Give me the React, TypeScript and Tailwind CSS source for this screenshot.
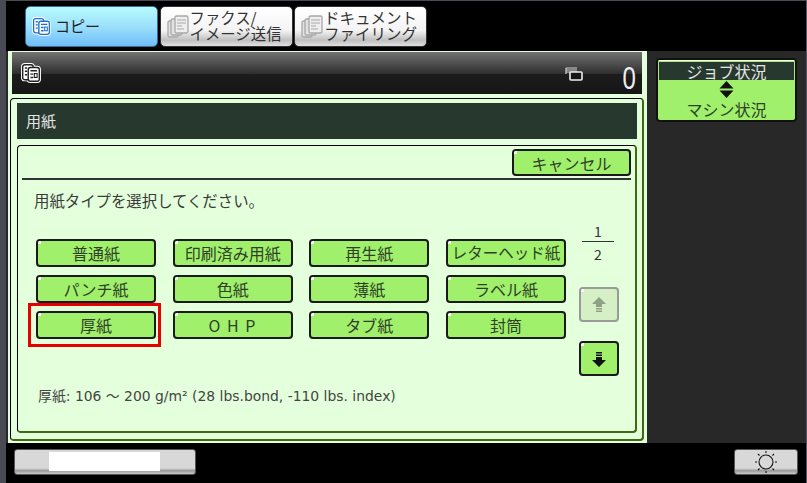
import { ReactNode } from "react";

const jp = "font-['Noto_Sans_CJK_JP','Noto_Sans',sans-serif]";

function CopyIcon({ size = 20, line = "#1f6fd0" }: { size?: number; line?: string }) {
    return (
        <svg width={size} height={size} viewBox="0 0 18 18" className="shrink-0">
            <rect x="1.500" y="1.500" width="9.500" height="13.500" rx="2" fill="#fff" stroke="#fff" strokeWidth="3" />
            <rect x="6.500" y="4" width="10" height="12.500" rx="2" fill="#fff" stroke="#fff" strokeWidth="3" />
            <rect x="1.500" y="1.500" width="9.500" height="13.500" rx="2" fill="#fff" stroke={line} strokeWidth="1.300" />
            <rect x="6.500" y="4" width="10" height="12.500" rx="2" fill="#fff" stroke={line} strokeWidth="1.300" />
            <path d="M3.500 4.500h2M3.500 7.500h2M3.500 10.500h2M8.500 7h6M8.500 10h2.500M8.500 13h2.500" stroke={line} strokeWidth="1.300" />
            <rect x="12" y="9.500" width="2.500" height="3.500" fill="none" stroke={line} />
        </svg>
    );
}

function GrayDocs() {
    return (
        <svg width="22" height="24" viewBox="0 0 22 24" className="shrink-0">
            <rect x="1" y="6" width="10" height="16" rx="1.500" fill="#e2e2e2" stroke="#a8a8a8" strokeWidth="1.300" />
            <rect x="4" y="4" width="11" height="16" rx="1.500" fill="#e2e2e2" stroke="#a8a8a8" strokeWidth="1.300" />
            <rect x="8" y="1" width="13" height="17" rx="1.500" fill="#eeeeee" stroke="#a8a8a8" strokeWidth="1.300" />
            <path d="M10 5h9M10 8h9M10 11h5M10 14h7" stroke="#a8a8a8" strokeWidth="1.200" />
        </svg>
    );
}

function Tab({ children, active }: { children: ReactNode; active?: boolean }) {
    return (
        <div
            className={
                active
                    ? "w-[133px] h-[41px] rounded-[5px] border border-[#2f6f9f] bg-gradient-to-b from-[#b8fbff] via-[#9ce0fb] to-[#6fbdf8] flex items-center gap-[5px] pl-[6px] text-[15px] text-[#222]"
                    : "w-[133px] h-[41px] rounded-[5px] border border-[#333] bg-[linear-gradient(#ffffff,#f4f4f4_60%,#c0c0c0_85%,#e0e0e0)] flex items-center gap-[1px] pl-[6px] text-[#333]"
            }
        >
            {children}
        </div>
    );
}

function PaperButton({ label, selected, size }: { label: string; selected?: boolean; size: string }) {
    return (
        <div className="relative">
            {selected && <div className="absolute -left-[8px] -top-[8px] w-[133px] h-[44px] border-[3px] border-[#e60000]" />}
            <div className={`relative w-[120px] h-[28px] rounded-[4px] border-2 border-[#1a1a1a] bg-[#a0f06c] flex items-center justify-center whitespace-nowrap text-[#2f3f28] ${size}`}>
                <div className="absolute left-0 top-0 w-[3px] h-[3px] bg-white rounded-tl-[2px]" />
                {label}
            </div>
        </div>
    );
}

function Arrow({ up }: { up?: boolean }) {
    return (
        <svg width="16" height="18" viewBox="0 0 16 18">
            {up ? (
                <path d="M8 1l7 7h-4v3H5V8H1zM5 12h6v1.500H5zM5 14.500h6V16H5z" fill="#8f9f88" />
            ) : (
                <path d="M8 17l7-7h-4V7H5v3H1zM5 6h6V4.500H5zM5 3.500h6V2H5z" fill="#111" />
            )}
        </svg>
    );
}

export default function App() {
    const papers = [
        "普通紙", "印刷済み用紙", "再生紙", "レターヘッド紙",
        "パンチ紙", "色紙", "薄紙", "ラベル紙",
        "厚紙", "O H P", "タブ紙", "封筒",
    ];

    return (
        <div className={`w-[807px] h-[483px] bg-black flex flex-col overflow-hidden border-t border-[#4a4a55] border-r border-r-[#55555f] border-l-[6px] border-l-[#4a4a55] ${jp}`}>

            {/* TABS */}
            <div className="h-[50px] shrink-0 flex items-start pt-[5px] pl-[19px] gap-[1.5px]">
                <Tab active>
                    <CopyIcon size={19} />
                    <span className="-ml-[1px]">コピー</span>
                </Tab>
                <Tab>
                    <GrayDocs />
                    <span className="text-[15.400px] leading-[16px] mb-[3px]">ファクス/<br />イメージ送信</span>
                </Tab>
                <Tab>
                    <GrayDocs />
                    <span className="text-[15.500px] leading-[16px] mb-[3px]">ドキュメント<br />ファイリング</span>
                </Tab>
            </div>

            {/* MIDDLE */}
            <div className="flex-1 flex min-h-0 bg-[#282828] pl-[2px]">
                <div className="w-[639px] shrink-0 bg-[#e4ffdc] pt-[1px] pb-[2px] flex flex-col">
                    <div className="h-[42px] shrink-0 ml-[4px] mr-[5px] bg-[linear-gradient(#737373,#2e2e2e_52%,#1c1c1c_52%,#161616)] flex items-center pl-[9px] pr-[6px] text-white">
                        <CopyIcon size={20} line="#222222" />
                        <svg width="18" height="14" viewBox="0 0 18 14" className="ml-auto mr-[35px] mt-[1px]">
                            <path d="M1 1h11M1 3h11M1 5h11M1 1v6" stroke="#cfcfcf" strokeWidth="1.200" fill="none" />
                            <rect x="5" y="5" width="12" height="8" rx="1" fill="#161616" stroke="#eeeeee" strokeWidth="1.600" />
                        </svg>
                        <span className="text-[32px] leading-none font-['Liberation_Sans',sans-serif] text-[#eee] mt-[9px] scale-x-75 origin-right">0</span>
                    </div>

                    {/* PANEL */}
                    <div className="flex-1 mt-[4px] ml-[2px] mr-[3px] border border-black border-r-[2px] border-b-[2px] border-r-[#3f6a10] border-b-[#3f6a10] rounded-[4px] pt-[4px] pl-[6px] pr-[5px] pb-[6px] flex flex-col min-h-0">
                        <div className="h-[36px] shrink-0 bg-[#27392e] text-[#e4e4e4] text-[15px] flex items-center pl-[9px]">用紙</div>

                        <div className="flex-1 mt-[6px] border border-black border-r-[2px] border-b-[2px] border-r-[#3f6a10] border-b-[#3f6a10] rounded-[4px] flex flex-col min-h-0">
                            <div className="h-[34px] shrink-0 ml-[4px] mr-[4px] flex justify-end items-start pt-[3px] border-b-[2px] border-[#333]">
                                <div className="relative w-[119px] h-[27px] rounded-[4px] border-2 border-[#1a1a1a] bg-[#a0f06c] flex items-center justify-center text-[16px] text-[#2f3f28]">
                                    <div className="absolute left-0 top-0 w-[3px] h-[3px] bg-white rounded-tl-[2px]" />
                                    キャンセル
                                </div>
                            </div>

                            <div className="flex-1 relative flex flex-col">
                                <p className="text-[15.400px] text-[#3a3a3a] mt-[10px] ml-[16px] leading-[20px]">用紙タイプを選択してください。</p>

                                <div className="flex mt-[29px] ml-[18px]">
                                    <div className="grid grid-cols-[120px_120px_120px_120px] gap-x-[16.670px] gap-y-[8px] content-start">
                                        {papers.map((p) => (
                                            <PaperButton
                                                key={p}
                                                label={p}
                                                selected={p === "厚紙"}
                                                size={p === "レターヘッド紙" ? "text-[15.500px]" : p === "O H P" ? "text-[16px] tracking-[1.500px]" : "text-[16px]"}
                                            />
                                        ))}
                                    </div>

                                    <div className="ml-[13px] w-[40px] flex flex-col items-center -mt-[16px]">
                                        <div className="w-[32px] -ml-[2px] text-center text-[14px] leading-[17px] text-[#333] border-b border-[#333] pb-[1px]">1</div>
                                        <div className="-ml-[2px] text-[14px] leading-[20px] text-[#333] mt-[2px]">2</div>
                                        <div className="relative mt-[23px] w-[40px] h-[35px] rounded-[4px] border-2 border-[#9a9a9a] bg-[#d4f0c4] flex items-center justify-center">
                                            <div className="absolute left-0 top-0 w-[3px] h-[3px] bg-white rounded-tl-[2px]" />
                                            <Arrow up />
                                        </div>
                                        <div className="relative mt-[19px] w-[40px] h-[35px] rounded-[4px] border-2 border-[#1a1a1a] bg-[#a0f06c] flex items-center justify-center">
                                            <div className="absolute left-0 top-0 w-[3px] h-[3px] bg-white rounded-tl-[2px]" />
                                            <Arrow />
                                        </div>
                                    </div>
                                </div>

                                <p className="absolute left-[20px] top-[207px] leading-[18px] text-[#444] font-['DejaVu_Sans','Noto_Sans_CJK_JP',sans-serif] text-[13.900px]">
                                    厚紙: 106 ～ 200 g/m² (28 lbs.bond, -110 lbs. index)
                                </p>
                            </div>
                        </div>
                    </div>
                </div>

                {/* RIGHT SIDE */}
                <div className="flex-1 pt-[7px] pl-[9px]">
                    <div className="relative w-[141px] h-[64px] rounded-[4px] border-2 border-[#111] bg-[#a0f06c] flex flex-col items-center text-[16px] text-[#2f3f28] overflow-hidden">
                        <div className="absolute left-0 top-0 w-full h-[1px] bg-white" />
                        <div className="w-[135px] h-[18px] mt-[2px] shrink-0 bg-[#27392e] text-[#e4e4e4] leading-[18px] text-center">ジョブ状況</div>
                        <svg width="15" height="17" viewBox="0 0 15 17" className="mt-[1px] shrink-0">
                            <path d="M7.500 0l7 7.500H.5zM.5 9.500h14L7.500 17z" fill="#111" />
                        </svg>
                        <div className="leading-[20px] mt-[1px]">マシン状況</div>
                    </div>
                </div>
            </div>

            {/* BOTTOM */}
            <div className="h-[40px] shrink-0 flex items-center justify-between pl-[8px] pr-[8px] pb-[2px]">
                <div className="w-[182px] h-[26px] rounded-[3px] border border-[#555] bg-[linear-gradient(#d8d8d8_76%,#9a9a9a_86%,#c8c8c8)] flex justify-center items-start pt-[2px] pr-[2px]">
                    <div className="w-[111px] h-[19px] bg-white" />
                </div>
                <div className="w-[64px] h-[26px] rounded-[3px] border border-[#555] bg-[linear-gradient(#d8d8d8_76%,#9a9a9a_86%,#c8c8c8)] flex items-center justify-center">
                    <svg width="22" height="22" viewBox="0 0 22 22">
                        <circle cx="11" cy="11" r="7" fill="none" stroke="#111" strokeWidth="1.100" />
                        <path d="M11 0v2M11 20v2M0 11h2M20 11h2M3 3l1.500 1.500M17.500 17.500L19 19M19 3l-1.500 1.500M3 19l1.500-1.500" stroke="#111" strokeWidth="1.100" />
                    </svg>
                </div>
            </div>
        </div>
    );
}
